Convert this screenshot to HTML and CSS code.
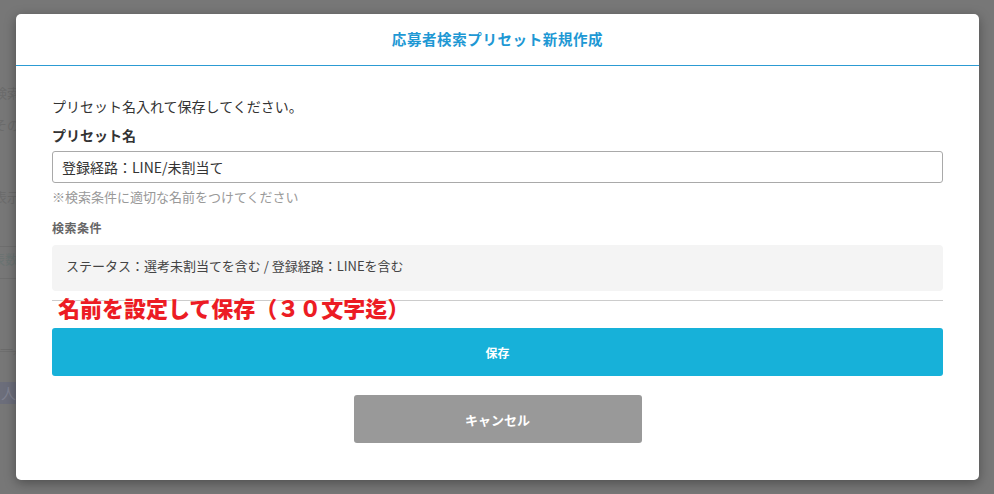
FILE: index.html
```html
<!DOCTYPE html>
<html lang="ja">
<head>
<meta charset="utf-8">
<title>応募者検索プリセット新規作成</title>
<link rel="stylesheet" href="styles.css">
</head>
<body>
<div class="page">
  <div class="ghost g1">検索条件</div>
  <div class="ghost g2">その他</div>
  <div class="ghost g3">表示件数</div>
  <div class="ghost-row"><span class="ghost g4">表数</span></div>
  <div class="ghost g5">一／</div>
  <div class="ghost-chip">人数</div>
</div>

<div class="modal">
  <div class="modal-header">応募者検索プリセット新規作成</div>
  <div class="modal-body">
    <p class="lead">プリセット名入れて保存してください。</p>
    <label class="field-label" for="preset">プリセット名</label>
    <input class="text-input" id="preset" type="text" value="登録経路：LINE/未割当て">
    <p class="hint">※検索条件に適切な名前をつけてください</p>
    <p class="cond-label">検索条件</p>
    <div class="cond-box">ステータス：選考未割当てを含む / 登録経路：LINEを含む</div>
    <div class="divider"></div>
    <div class="note">名前を設定して保存（３０文字迄）</div>
    <button class="btn btn-save" type="button">保存</button>
    <button class="btn btn-cancel" type="button">キャンセル</button>
  </div>
</div>
</body>
</html>
```

FILE: styles.css
```css
* { box-sizing: border-box; }

html, body {
  margin: 0;
  padding: 0;
}

body {
  width: 994px;
  height: 494px;
  overflow: hidden;
  background: #777777;
  font-family: "Noto Sans CJK JP", "Noto Sans", sans-serif;
  color: #333;
  position: relative;
}

/* faint page behind the overlay */
.page {
  display: flex;
  flex-direction: column;
  padding-top: 84px;
  color: #6b6b6b;
  font-size: 13px;
  width: 16px;
  overflow: hidden;
}
.ghost { line-height: 18px; white-space: nowrap; margin-left: -6px; }
.g1 { margin-bottom: 14px; }
.g2 { margin-bottom: 54px; }
.g3 { margin-bottom: 40px; }
.ghost-row {
  border-top: 1px solid #6e6e6e;
  border-bottom: 1px solid #6e6e6e;
  padding: 2px 0 11px;
  height: 33px;
  width: 16px;
}
.g4 { color: #6a7372; margin-left: -8px; }
.g5 {
  margin-top: 63px;
  border-bottom: 1px solid #6e6e6e;
  line-height: 14px;
  height: 10px;
  margin-left: 0;
  width: 16px;
  text-align: right;
}
.ghost-chip {
  margin-top: 30px;
  background: #6c6e7b;
  color: #7f8190;
  height: 22px;
  line-height: 22px;
  width: 16px;
  font-size: 15px;
  padding-left: 1px;
  white-space: nowrap;
  overflow: hidden;
}

/* modal */
.modal {
  position: absolute;
  top: 14px;
  left: 16px;
  width: 963px;
  height: 466px;
  background: #fff;
  border-radius: 5px;
  box-shadow: 0 3px 12px rgba(0, 0, 0, 0.35);
}

.modal-header {
  height: 52px;
  border-bottom: 1px solid #2c9bd3;
  display: flex;
  align-items: center;
  justify-content: center;
  padding-bottom: 2px;
  color: #1e98d4;
  font-size: 14.5px;
  font-weight: 700;
  letter-spacing: 0.6px;
}

.modal-body {
  position: relative;
  padding: 30px 36px 0;
  display: flex;
  flex-direction: column;
}

.lead {
  margin: 0 0 9px;
  font-size: 14px;
  line-height: 20px;
  color: #333;
}

.field-label {
  font-size: 14px;
  line-height: 20px;
  font-weight: 700;
  color: #333;
  margin-bottom: 6px;
}

.text-input {
  height: 32px;
  border: 1px solid #a9a9a9;
  border-radius: 3px;
  padding: 0 9px;
  font-family: inherit;
  font-size: 14px;
  color: #333;
  background: #fff;
  outline: none;
}

.hint {
  margin: 5px 0 0;
  font-size: 13px;
  line-height: 18px;
  color: #999;
}

.cond-label {
  margin: 13px 0 8px;
  font-size: 12px;
  line-height: 18px;
  font-weight: 700;
  color: #666;
  letter-spacing: 0.5px;
}

.cond-box {
  background: #f4f4f4;
  border-radius: 4px;
  padding: 11px 14px 15px;
  font-size: 13px;
  line-height: 20px;
  color: #444;
}

.divider {
  margin-top: 9px;
  height: 1px;
  background: #cccccc;
}

.note {
  position: absolute;
  left: 42px;
  top: 228px;
  font-size: 22px;
  line-height: 26px;
  font-weight: 900;
  color: #ec1c24;
  white-space: nowrap;
  text-shadow: 0 0 2px #fff, 0 0 2px #fff;
}

.btn {
  border: none;
  border-radius: 3px;
  color: #fff;
  font-family: inherit;
  font-weight: 700;
  height: 48px;
  cursor: pointer;
}

.btn-save {
  margin-top: 27px;
  background: #17b1d9;
  font-size: 12px;
}

.btn-cancel {
  margin-top: 19px;
  align-self: center;
  width: 288px;
  background: #999999;
  font-size: 13px;
}
```
